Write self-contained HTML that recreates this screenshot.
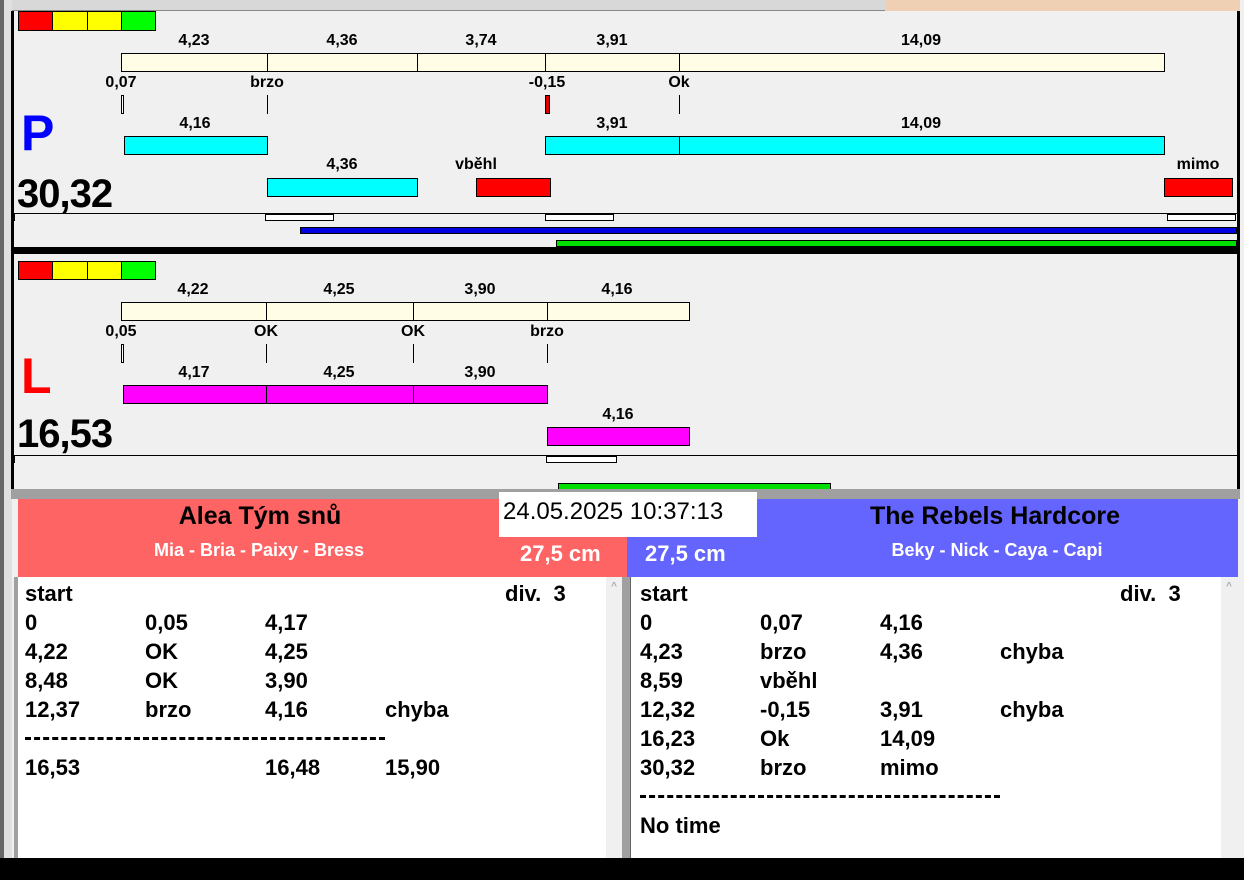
<!DOCTYPE html>
<html><head><meta charset="utf-8"><style>
*{margin:0;padding:0;box-sizing:border-box}
body{width:1244px;height:880px;position:relative;overflow:hidden;background:#f0f0f0;font-family:"Liberation Sans",Arial,sans-serif;font-weight:bold}
div{position:absolute}
.b{border:1px solid #000}
.l{font-size:16px;transform:translateX(-50%);white-space:nowrap;color:#000}
.cr{background:#fffde6}
.cy{background:#00ffff}
.rd{background:#ff0000}
.mg{background:#ff00ff}
.t{font-size:22px;white-space:nowrap}
.vl{width:1px;background:#000}
</style></head><body>
<div style="left:0;top:0;width:1244px;height:11px;background:#d8d8d8;border-bottom:1px solid #888"></div>
<div style="left:885px;top:0;width:359px;height:11px;background:#f0d0b4"></div>
<div style="left:0;top:0;width:4px;height:880px;background:#666"></div>
<div style="left:4px;top:0;width:8px;height:880px;background:#e0e0e0"></div>
<div style="left:11px;top:11px;width:3px;height:480px;background:#000"></div>
<div style="left:1237px;top:11px;width:3px;height:480px;background:#000"></div>
<div style="left:1240px;top:0;width:4px;height:880px;background:#f0f0f0"></div>

<div class="rd b" style="left:18px;top:11px;width:35px;height:20px"></div>
<div class="b" style="left:52px;top:11px;width:36px;height:20px;background:#ff0"></div>
<div class="b" style="left:87px;top:11px;width:35px;height:20px;background:#ff0"></div>
<div class="b" style="left:121px;top:11px;width:35px;height:20px;background:#0f0"></div>

<div class="l" style="left:194px;top:32px">4,23</div>
<div class="l" style="left:342px;top:32px">4,36</div>
<div class="l" style="left:481px;top:32px">3,74</div>
<div class="l" style="left:612px;top:32px">3,91</div>
<div class="l" style="left:921px;top:32px">14,09</div>
<div class="cr b" style="left:121px;top:53px;width:1044px;height:19px"></div>
<div class="vl" style="left:267px;top:53px;height:19px"></div>
<div class="vl" style="left:417px;top:53px;height:19px"></div>
<div class="vl" style="left:545px;top:53px;height:19px"></div>
<div class="vl" style="left:679px;top:53px;height:19px"></div>
<div class="l" style="left:121px;top:74px">0,07</div>
<div class="l" style="left:267px;top:74px">brzo</div>
<div class="l" style="left:547px;top:74px">-0,15</div>
<div class="l" style="left:679px;top:74px">Ok</div>
<div class="b" style="left:121px;top:95px;width:3px;height:19px;background:#fff"></div>
<div class="vl" style="left:267px;top:95px;height:19px"></div>
<div class="rd b" style="left:545px;top:95px;width:5px;height:19px;background:#d00"></div>
<div class="vl" style="left:679px;top:95px;height:19px"></div>

<div style="left:21px;top:104px;font-size:50px;color:#0000ff">P</div>
<div class="l" style="left:195px;top:115px">4,16</div>
<div class="l" style="left:612px;top:115px">3,91</div>
<div class="l" style="left:921px;top:115px">14,09</div>
<div class="cy b" style="left:124px;top:136px;width:144px;height:19px"></div>
<div class="cy b" style="left:545px;top:136px;width:620px;height:19px"></div>
<div class="vl" style="left:679px;top:136px;height:19px"></div>
<div class="l" style="left:342px;top:156px">4,36</div>
<div class="l" style="left:476px;top:156px">vběhl</div>
<div class="l" style="left:1198px;top:156px">mimo</div>
<div class="cy b" style="left:267px;top:178px;width:151px;height:19px"></div>
<div class="rd b" style="left:476px;top:178px;width:75px;height:19px"></div>
<div class="rd b" style="left:1164px;top:178px;width:69px;height:19px"></div>
<div style="left:17px;top:172px;font-size:40px;letter-spacing:-1px">30,32</div>
<div style="left:14px;top:213px;width:1223px;height:1px;background:#000"></div>
<div class="vl" style="left:14px;top:213px;height:8px"></div>
<div class="b" style="left:265px;top:214px;width:69px;height:7px;background:#fff"></div>
<div class="b" style="left:545px;top:214px;width:69px;height:7px;background:#fff"></div>
<div class="b" style="left:1167px;top:214px;width:69px;height:7px;background:#fff"></div>
<div style="left:300px;top:227px;width:937px;height:7px;background:#0000e0;border:1px solid #000"></div>
<div style="left:556px;top:240px;width:681px;height:7px;background:#00e000;border:1px solid #000"></div>
<div style="left:11px;top:247px;width:1229px;height:7px;background:#000"></div>

<div class="rd b" style="left:18px;top:261px;width:35px;height:19px"></div>
<div class="b" style="left:52px;top:261px;width:36px;height:19px;background:#ff0"></div>
<div class="b" style="left:87px;top:261px;width:35px;height:19px;background:#ff0"></div>
<div class="b" style="left:121px;top:261px;width:35px;height:19px;background:#0f0"></div>
<div class="l" style="left:193px;top:281px">4,22</div>
<div class="l" style="left:339px;top:281px">4,25</div>
<div class="l" style="left:480px;top:281px">3,90</div>
<div class="l" style="left:617px;top:281px">4,16</div>
<div class="cr b" style="left:121px;top:302px;width:569px;height:19px"></div>
<div class="vl" style="left:266px;top:302px;height:19px"></div>
<div class="vl" style="left:413px;top:302px;height:19px"></div>
<div class="vl" style="left:547px;top:302px;height:19px"></div>
<div class="l" style="left:121px;top:323px">0,05</div>
<div class="l" style="left:266px;top:323px">OK</div>
<div class="l" style="left:413px;top:323px">OK</div>
<div class="l" style="left:547px;top:323px">brzo</div>
<div class="b" style="left:121px;top:344px;width:3px;height:19px;background:#fff"></div>
<div class="vl" style="left:266px;top:344px;height:19px"></div>
<div class="vl" style="left:413px;top:344px;height:19px"></div>
<div class="vl" style="left:547px;top:344px;height:19px"></div>
<div style="left:21px;top:347px;font-size:50px;color:#ff0000">L</div>
<div class="l" style="left:194px;top:364px">4,17</div>
<div class="l" style="left:339px;top:364px">4,25</div>
<div class="l" style="left:480px;top:364px">3,90</div>
<div class="mg b" style="left:123px;top:385px;width:425px;height:19px"></div>
<div class="vl" style="left:266px;top:385px;height:19px"></div>
<div class="vl" style="left:413px;top:385px;height:19px"></div>
<div class="l" style="left:618px;top:406px">4,16</div>
<div class="mg b" style="left:547px;top:427px;width:143px;height:19px"></div>
<div style="left:17px;top:412px;font-size:40px;letter-spacing:-1px">16,53</div>
<div style="left:14px;top:455px;width:1223px;height:1px;background:#000"></div>
<div class="vl" style="left:14px;top:455px;height:8px"></div>
<div class="b" style="left:546px;top:456px;width:71px;height:7px;background:#fff"></div>
<div style="left:558px;top:483px;width:273px;height:7px;background:#00e000;border:1px solid #000"></div>
<div style="left:11px;top:489px;width:1229px;height:10px;background:#a0a0a0"></div>

<div style="left:18px;top:499px;width:609px;height:78px;background:#ff6464"></div>
<div style="left:627px;top:499px;width:611px;height:78px;background:#6464ff"></div>
<div style="left:260px;top:502px;font-size:25px;transform:translateX(-50%);white-space:nowrap">Alea Tým snů</div>
<div style="left:995px;top:502px;font-size:25px;transform:translateX(-50%);white-space:nowrap">The Rebels Hardcore</div>
<div style="left:259px;top:540px;font-size:18px;color:#fff;transform:translateX(-50%);white-space:nowrap">Mia - Bria - Paixy - Bress</div>
<div style="left:997px;top:540px;font-size:18px;color:#fff;transform:translateX(-50%);white-space:nowrap">Beky - Nick - Caya - Capi</div>
<div style="left:520px;top:541px;font-size:22px;color:#fff;white-space:nowrap">27,5 cm</div>
<div style="left:645px;top:541px;font-size:22px;color:#fff;white-space:nowrap">27,5 cm</div>
<div style="left:499px;top:492px;width:258px;height:45px;background:#fff"></div>
<div style="left:503px;top:498px;font-size:24px;font-weight:normal;white-space:nowrap">24.05.2025 10:37:13</div>

<div style="left:14px;top:577px;width:4px;height:281px;background:#a0a0a0"></div>
<div style="left:18px;top:577px;width:588px;height:281px;background:#fff"></div>
<div style="left:606px;top:577px;width:16px;height:281px;background:#f0f0f0;font-size:10px;color:#aaa;text-align:center;padding-top:4px">^</div>
<div style="left:622px;top:577px;width:9px;height:281px;background:#a0a0a0;border-right:1px solid #666"></div>
<div style="left:631px;top:577px;width:590px;height:281px;background:#fff"></div>
<div style="left:1221px;top:577px;width:16px;height:281px;background:#f0f0f0;font-size:10px;color:#aaa;text-align:center;padding-top:4px">^</div>
<div style="left:0;top:858px;width:1244px;height:22px;background:#000"></div>

<div class="t" style="left:25px;top:581px">start</div><div class="t" style="left:505px;top:581px">div.&nbsp; 3</div>
<div class="t" style="left:25px;top:610px">0</div><div class="t" style="left:145px;top:610px">0,05</div><div class="t" style="left:265px;top:610px">4,17</div>
<div class="t" style="left:25px;top:639px">4,22</div><div class="t" style="left:145px;top:639px">OK</div><div class="t" style="left:265px;top:639px">4,25</div>
<div class="t" style="left:25px;top:668px">8,48</div><div class="t" style="left:145px;top:668px">OK</div><div class="t" style="left:265px;top:668px">3,90</div>
<div class="t" style="left:25px;top:697px">12,37</div><div class="t" style="left:145px;top:697px">brzo</div><div class="t" style="left:265px;top:697px">4,16</div><div class="t" style="left:385px;top:697px">chyba</div>
<div style="left:25px;top:737px;width:360px;height:3px;border-top:3px dashed #000"></div>
<div class="t" style="left:25px;top:755px">16,53</div><div class="t" style="left:265px;top:755px">16,48</div><div class="t" style="left:385px;top:755px">15,90</div>

<div class="t" style="left:640px;top:581px">start</div><div class="t" style="left:1120px;top:581px">div.&nbsp; 3</div>
<div class="t" style="left:640px;top:610px">0</div><div class="t" style="left:760px;top:610px">0,07</div><div class="t" style="left:880px;top:610px">4,16</div>
<div class="t" style="left:640px;top:639px">4,23</div><div class="t" style="left:760px;top:639px">brzo</div><div class="t" style="left:880px;top:639px">4,36</div><div class="t" style="left:1000px;top:639px">chyba</div>
<div class="t" style="left:640px;top:668px">8,59</div><div class="t" style="left:760px;top:668px">vběhl</div>
<div class="t" style="left:640px;top:697px">12,32</div><div class="t" style="left:760px;top:697px">-0,15</div><div class="t" style="left:880px;top:697px">3,91</div><div class="t" style="left:1000px;top:697px">chyba</div>
<div class="t" style="left:640px;top:726px">16,23</div><div class="t" style="left:760px;top:726px">Ok</div><div class="t" style="left:880px;top:726px">14,09</div>
<div class="t" style="left:640px;top:755px">30,32</div><div class="t" style="left:760px;top:755px">brzo</div><div class="t" style="left:880px;top:755px">mimo</div>
<div style="left:640px;top:795px;width:360px;height:3px;border-top:3px dashed #000"></div>
<div class="t" style="left:640px;top:813px">No time</div>
</body></html>
